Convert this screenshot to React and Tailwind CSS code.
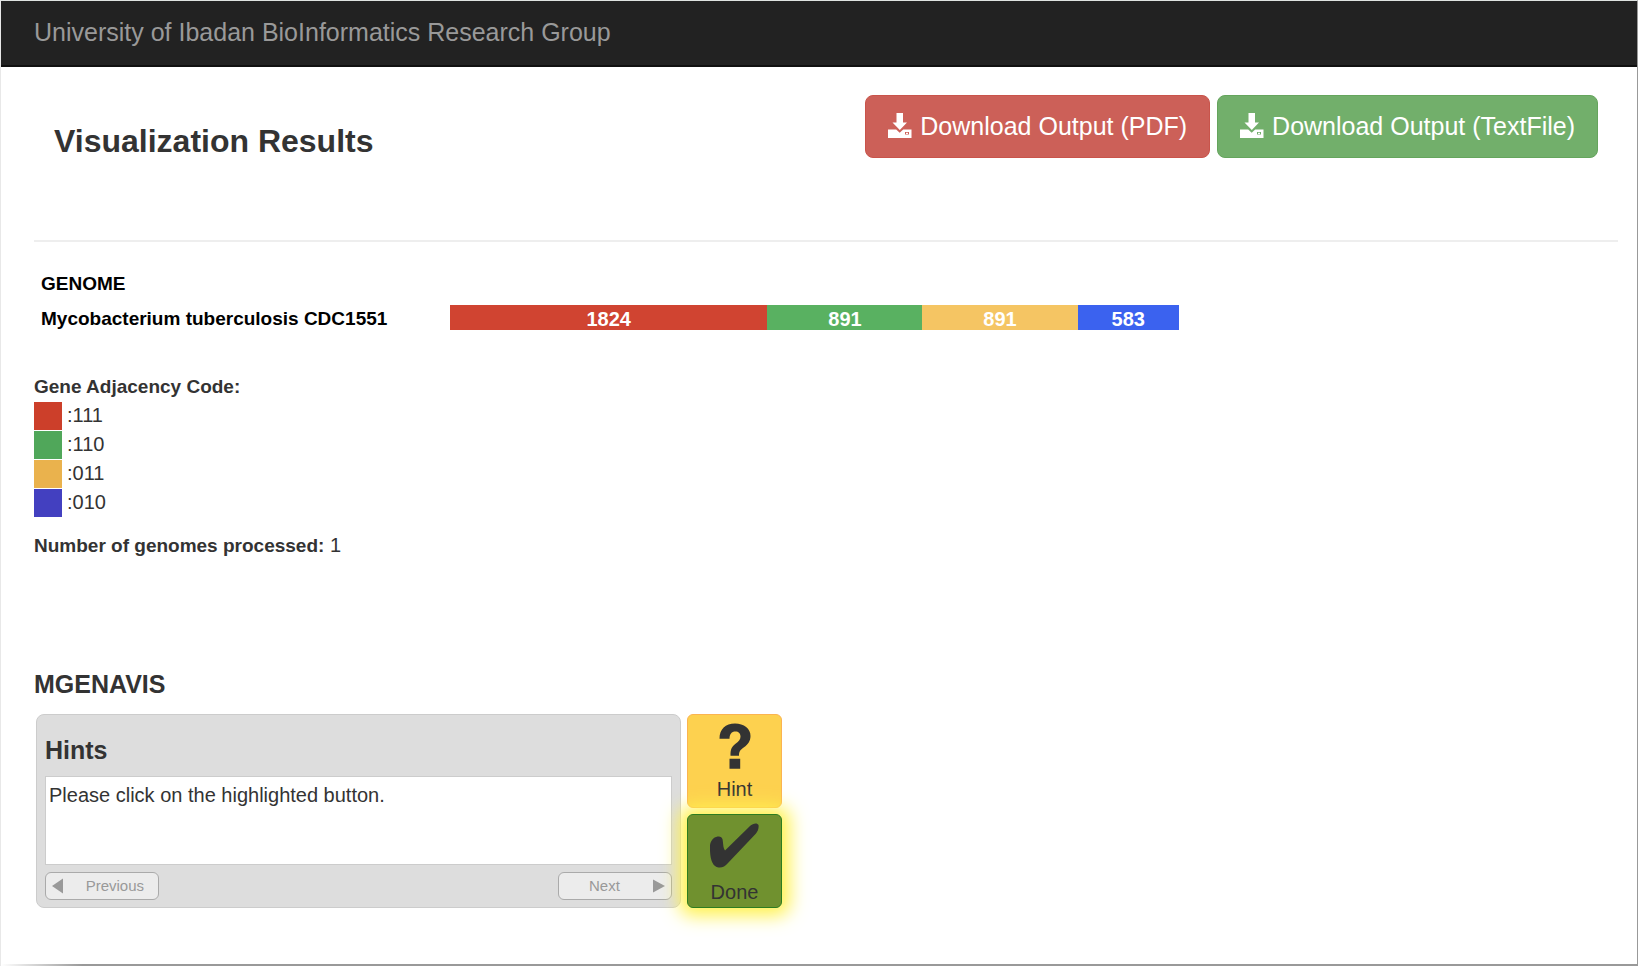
const genomes = [
  {
    name: 'Mycobacterium tuberculosis CDC1551',
    segments: [
      { value: 1824, color: 'bg-[#d04431]' },
      { value: 891, color: 'bg-[#59b161]' },
      { value: 891, color: 'bg-[#f5c563]' },
      { value: 583, color: 'bg-[#3b62ef]' },
    ],
  },
];

const adjacencyCodes = [
  { code: '111', color: 'bg-[#cc3f2a]' },
  { code: '110', color: 'bg-[#50a75a]' },
  { code: '011', color: 'bg-[#eab24d]' },
  { code: '010', color: 'bg-[#4340c0]' },
];

const SaveIcon = () => (
  <svg viewBox="0 0 24 28" className="h-7 w-6 shrink-0" fill="currentColor" aria-hidden="true">
    <path d="M8.500 0H15v9.500h4L11.800 17 4.500 9.500h4z" />
    <path fillRule="evenodd" d="M0 16.500h8.200l3.500 3.200 3.500-3.200h8.300V25H0zM17 19v2.600h4V19z" />
    <path d="M18 19.700h2v1.200h-2z" />
  </svg>
);

const DownloadButton = ({ color, children }) => (
  <button
    type="button"
    className={`flex h-[63px] items-center gap-2 rounded-lg border px-[22px] text-[25px] text-white ${color}`}
  >
    <SaveIcon />
    {children}
  </button>
);

const Navbar = () => (
  <nav className="h-[66px] border-b-2 border-[#101010] bg-[#222] px-[33px] pt-[13px]">
    <a href="#" className="text-[25px] leading-9 text-[#999]">
      University of Ibadan BioInformatics Research Group
    </a>
  </nav>
);

const GenomeTable = () => (
  <table className="ml-[3px] text-left text-[19px] leading-6 text-black">
    <thead>
      <tr>
        <th className="h-[35px] w-[413px] px-1 font-bold">GENOME</th>
        <th />
      </tr>
    </thead>
    <tbody>
      {genomes.map((genome) => (
        <tr key={genome.name}>
          <th scope="row" className="h-[35px] px-1 font-bold">{genome.name}</th>
          <td className="w-[729px] pb-[2px]">
            <div className="flex text-xl leading-7">
              {genome.segments.map((segment, i) => (
                <div
                  key={i}
                  className={`h-[25px] basis-0 text-center font-bold text-white ${segment.color}`}
                  style={{ flexGrow: segment.value }}
                >
                  {segment.value}
                </div>
              ))}
            </div>
          </td>
        </tr>
      ))}
    </tbody>
  </table>
);

const Legend = () => (
  <section className="mt-9 text-xl leading-[29px]">
    <h2 className="text-[19px] font-bold">Gene Adjacency Code:</h2>
    <ul>
      {adjacencyCodes.map(({ code, color }) => (
        <li key={code} className="flex h-[29px] items-start gap-[5px]">
          <span className={`mt-px h-7 w-7 ${color}`} />
          <span>:{code}</span>
        </li>
      ))}
    </ul>
    <p className="mt-[14px]">
      <b className="text-[19px]">Number of genomes processed:</b> {genomes.length}
    </p>
  </section>
);

const PagerButton = ({ children }) => (
  <button
    type="button"
    className="flex h-7 w-[114px] items-center justify-between rounded-md border border-[#aaa] bg-[#ececec] px-[6px] text-[15px] leading-6 text-[#999]"
  >
    {children}
  </button>
);

const HintPanel = () => (
  <div className="w-[645px] rounded-lg border border-[#ccc] bg-[#ddd] px-2 pt-[17px] pb-[7px]">
    <h3 className="text-[25px] leading-9 font-bold">Hints</h3>
    <div className="mt-2 h-[89px] border border-[#ccc] bg-white px-[3px] pt-1 text-xl leading-7">
      Please click on the highlighted button.
    </div>
    <div className="mt-[7px] flex justify-between">
      <PagerButton>
        <svg viewBox="0 0 12 16" className="h-4 w-3" fill="currentColor" aria-hidden="true">
          <path d="M11 .5v15L0 8z" />
        </svg>
        <span className="mr-2">Previous</span>
      </PagerButton>
      <PagerButton>
        <span className="ml-6">Next</span>
        <svg viewBox="0 0 12 16" className="h-4 w-3" fill="currentColor" aria-hidden="true">
          <path d="M0 1.500v13L12 8z" />
        </svg>
      </PagerButton>
    </div>
  </div>
);

const App = () => {
  return (
    <div className="flex min-h-screen flex-col border-t border-r border-l border-t-[#dfe3e1] border-r-[#999] border-l-[#e8e8e8] bg-white font-['Liberation_Sans',Arial,sans-serif] text-[#333]">
      <Navbar />
      <main className="grow pr-[19px] pb-12 pl-[33px]">
        <header className="flex h-[175px] items-start justify-between border-b-2 border-[#eee] pt-7 pr-5 pl-5">
          <h1 className="pt-6 text-[32px] leading-[44px] font-bold">Visualization Results</h1>
          <div className="flex gap-[7px]">
            <DownloadButton color="border-[#c9544b] bg-[#cc6058]">Download Output (PDF)</DownloadButton>
            <DownloadButton color="border-[#65a55d] bg-[#72af6b]">Download Output (TextFile)</DownloadButton>
          </div>
        </header>
        <div className="pt-6">
          <GenomeTable />
          <Legend />
        </div>
        <section className="mt-[106px]">
          <h2 className="text-[25px] leading-9 font-bold">MGENAVIS</h2>
          <div className="mt-3 ml-[2px] flex gap-[6px]">
            <HintPanel />
            <div className="flex flex-col gap-[6px] text-xl leading-6">
              <button
                type="button"
                className="flex h-[94px] w-[95px] flex-col items-center justify-between rounded-md border border-[#fbb450] bg-[#fdd14f] pt-2 pb-[6px]"
              >
                <svg viewBox="0 0 32 46" className="h-[46px] w-8" aria-hidden="true">
                  <path
                    fill="#333"
                    d="M.5 15.700C.5 6 6.500.5 16 .5c9 0 15.500 5 15.500 12.500 0 5-2.500 8.500-6.500 11.200-4 2.800-5 4.300-5 8.500h-8.500c0-6 .7-8.700 5-12 3.500-2.700 5-4 5-7.200 0-3-2-5-5-5-4 0-6 2.700-6 7.200zM10.500 35.700h10.700v10H10.500z"
                  />
                </svg>
                Hint
              </button>
              <button
                type="button"
                className="flex h-[94px] w-[95px] flex-col items-center justify-between rounded-md border border-[#2c7d20] bg-[#70912f] pt-2 pb-[3px] shadow-[0_0_18px_8px_#fff250]"
              >
                <svg viewBox="0 0 49 46" className="h-[46px] w-[49px]" aria-hidden="true">
                  <path
                    fill="#333"
                    d="M0 22c1-6 5-8.500 9-8.500 6 0 2.500 9 6 14L40 3c3-3 7.500-3.500 8.500-1 .5 3-.5 6-2.500 8.500L18 40c-3 3.500-6 5-9.500 4.500C2.500 43.500-.5 36 0 22z"
                  />
                </svg>
                Done
              </button>
            </div>
          </div>
        </section>
      </main>
      <div className="h-[2px] bg-linear-to-r from-white to-[#999] to-5%" />
    </div>
  );
};

export default App;
